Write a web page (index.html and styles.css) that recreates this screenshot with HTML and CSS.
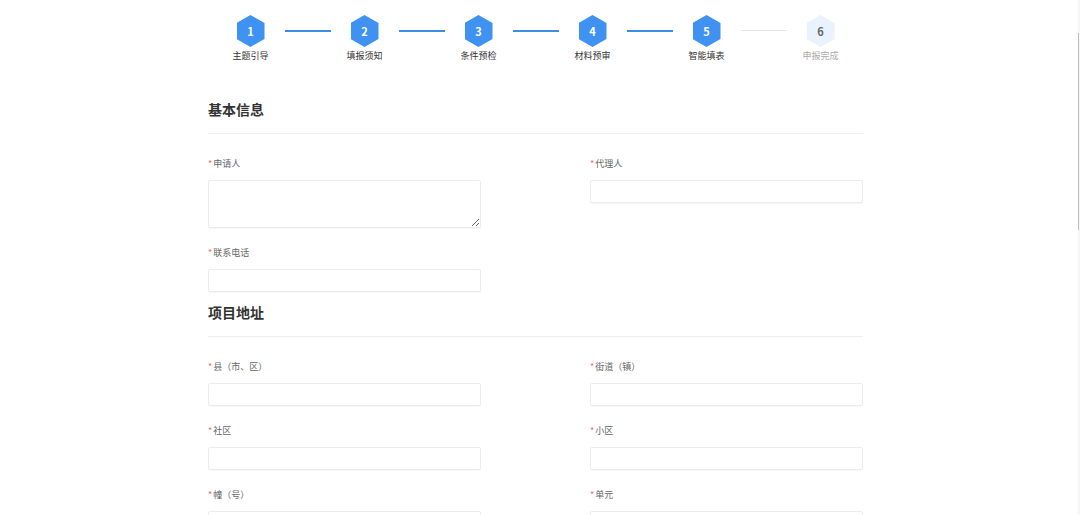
FILE: index.html
```html
<!DOCTYPE html>
<html lang="zh-CN">
<head>
    <meta charset="utf-8">
    <meta name="viewport" content="width=device-width, initial-scale=1.0">
    <title>智能填表</title>
    <link rel="stylesheet" href="styles.css">
</head>
<body>

    <div class="page">
        <!-- 步骤条 -->
        <div class="steps">
            <div class="step done"><div class="hex">1</div><div class="step-name">主题引导</div></div>
            <div class="line"></div>
            <div class="step done"><div class="hex">2</div><div class="step-name">填报须知</div></div>
            <div class="line"></div>
            <div class="step done"><div class="hex">3</div><div class="step-name">条件预检</div></div>
            <div class="line"></div>
            <div class="step done"><div class="hex">4</div><div class="step-name">材料预审</div></div>
            <div class="line"></div>
            <div class="step done"><div class="hex">5</div><div class="step-name">智能填表</div></div>
            <div class="line wait"></div>
            <div class="step wait"><div class="hex">6</div><div class="step-name">申报完成</div></div>
        </div>

        <!-- 基本信息 -->
        <div class="section-title">基本信息</div>
        <div class="form-grid first">
            <div class="field">
                <label class="label"><span class="req">*</span>申请人</label>
                <textarea class="ipt area"></textarea>
            </div>
            <div class="field">
                <label class="label"><span class="req">*</span>代理人</label>
                <input class="ipt" type="text">
            </div>
            <div class="field">
                <label class="label"><span class="req">*</span>联系电话</label>
                <input class="ipt" type="text">
            </div>
        </div>

        <!-- 项目地址 -->
        <div class="section-title">项目地址</div>
        <div class="form-grid">
            <div class="field">
                <label class="label"><span class="req">*</span>县（市、区）</label>
                <input class="ipt" type="text">
            </div>
            <div class="field">
                <label class="label"><span class="req">*</span>街道（镇）</label>
                <input class="ipt" type="text">
            </div>
            <div class="field">
                <label class="label"><span class="req">*</span>社区</label>
                <input class="ipt" type="text">
            </div>
            <div class="field">
                <label class="label"><span class="req">*</span>小区</label>
                <input class="ipt" type="text">
            </div>
            <div class="field">
                <label class="label"><span class="req">*</span>幢（号）</label>
                <input class="ipt" type="text">
            </div>
            <div class="field">
                <label class="label"><span class="req">*</span>单元</label>
                <input class="ipt" type="text">
            </div>
        </div>
    </div>

    <!-- 右侧滚动条 -->
    <div class="scroll-track"><div class="scroll-thumb"></div></div>

</body>
</html>
```

FILE: styles.css
```css
html, body {
    height: 100%;
    overflow: hidden;
}

body {
    margin: 0;
    padding-right: 9px;
    background-color: #fff;
    font-family: "Noto Sans CJK SC", "Noto Sans", sans-serif;
    color: #333;
}

.page {
    width: 655px;
    margin: 0 auto;
}

/* 步骤条 */
.steps {
    display: flex;
    justify-content: center;
    align-items: flex-start;
    padding-top: 15px;
    height: 48px;
}

.step {
    width: 28px;
    display: flex;
    flex-direction: column;
    align-items: center;
}

.hex {
    width: 28px;
    height: 32px;
    clip-path: polygon(50% 0, 100% 25%, 100% 75%, 50% 100%, 0 75%, 0 25%);
    background-color: #3f92f2;
    color: #fff;
    font-size: 11px;
    font-weight: bold;
    display: flex;
    justify-content: center;
    align-items: center;
}

.step-name {
    margin-top: 2px;
    font-size: 9px;
    line-height: 14px;
    white-space: nowrap;
    color: #333;
}

.step.wait .hex {
    background-color: #eaf2fe;
    color: #666;
}

.step.wait .step-name {
    color: #aaa;
}

.line {
    width: 46px;
    height: 2px;
    margin: 15px 20px 0;
    background-color: #3a8ee6;
}

.line.wait {
    height: 1px;
    background-color: #e6e6e6;
}

/* 标题 */
.section-title {
    font-size: 14px;
    font-weight: bold;
    line-height: 20px;
    color: #333;
    padding-bottom: 14px;
    border-bottom: 1px solid #eeeeee;
    margin-top: 36px;
}

.form-grid + .section-title {
    margin-top: -7px;
}

/* 表单 */
.form-grid {
    display: grid;
    grid-template-columns: 273px 273px;
    column-gap: 109px;
    padding-top: 22px;
}

.field {
    display: flex;
    flex-direction: column;
    align-items: flex-start;
    margin-bottom: 17px;
}

.label {
    font-size: 9px;
    line-height: 15px;
    color: #666;
    margin-bottom: 9px;
}

.req {
    color: #f56c6c;
    margin-right: 1px;
}

.ipt {
    box-sizing: border-box;
    width: 273px;
    height: 23px;
    margin: 0;
    border: 1px solid #ececec;
    border-radius: 2px;
    background: #fff;
    box-shadow: 0 1px 1px rgba(0, 0, 0, 0.03);
    outline: none;
    font-family: inherit;
}

.ipt.area {
    height: 48px;
    resize: vertical;
}

/* 滚动条 */
.scroll-track {
    position: fixed;
    top: 0;
    right: 0;
    width: 2px;
    height: 100%;
    background-color: #f6f6f6;
}

.scroll-thumb {
    position: absolute;
    top: 33px;
    left: 0;
    width: 1px;
    height: 197px;
    background-color: #bdbdbd;
}
```
